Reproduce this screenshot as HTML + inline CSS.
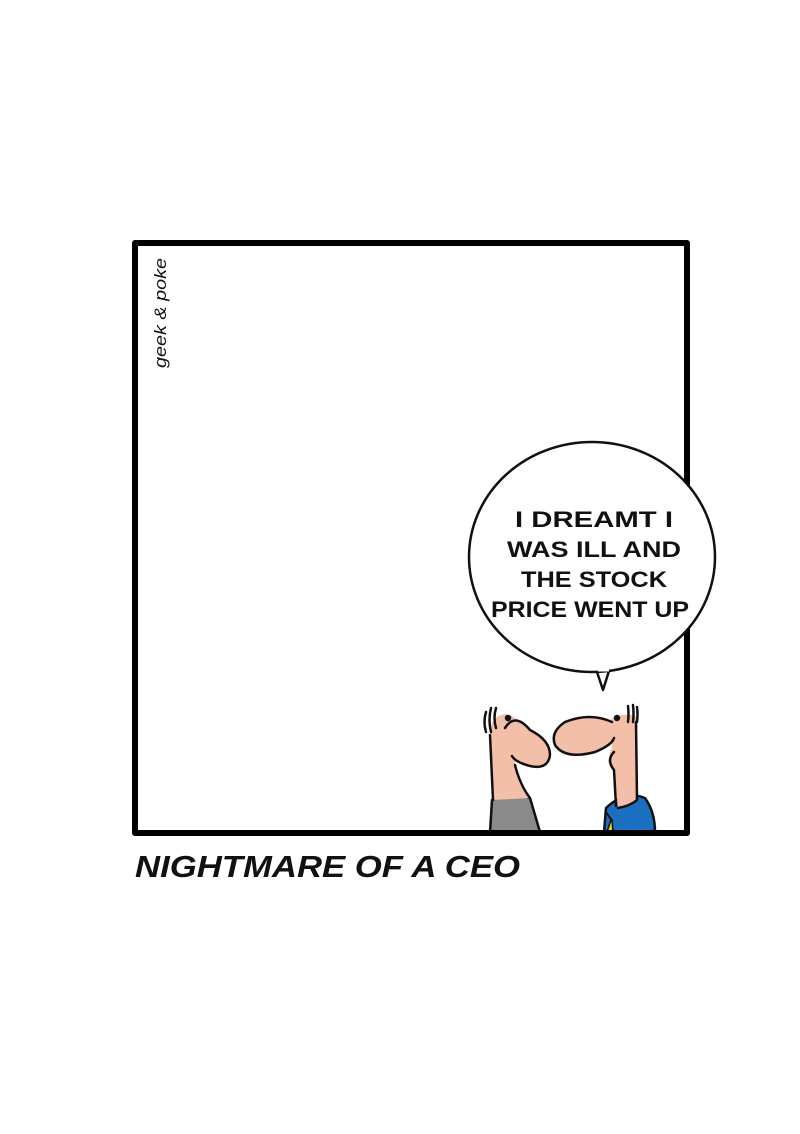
<!DOCTYPE html>
<html><head><meta charset="utf-8"><style>
html,body{margin:0;padding:0;background:#fff;}
svg{display:block}
</style></head><body>
<svg width="800" height="1134" viewBox="0 0 800 1134" xmlns="http://www.w3.org/2000/svg">
<rect width="800" height="1134" fill="#fff"/>
<g stroke="#111" stroke-width="2.5" stroke-linecap="round" stroke-linejoin="round" fill="none">
<!-- left guy body -->
<path d="M490 832 L492 800 Q510 790 530 798 L540 832 Z" fill="#8a8a8a"/>
<path d="M493 800 L490 730 Q492 716 505 714 Q518 716 520 728 L515 765 Q520 785 530 798 Z" fill="#f4bfa8" stroke="none"/>
<path d="M493 800 L490 735"/>
<path d="M515 765 Q520 785 530 798"/>
<path d="M505 728 Q515 712 530 730 Q550 740 550 755 Q548 770 530 766 Q515 762 512 756" fill="#f4bfa8"/>
<path d="M486 712 Q483 722 486 732 M491 708 Q488 720 491 732 M496 708 Q493 718 496 728"/>
<circle cx="508" cy="718" r="2" fill="#111"/>
<!-- right guy body -->
<path d="M604 832 L606 808 Q625 790 645 798 Q655 812 655 832 Z" fill="#1a6fc0"/>
<path d="M606 812 L611 820 L607 832 L613 832 L612 820 Z" fill="#f2d21a" stroke-width="1.5"/>
<!-- right head -->
<path d="M610 720 Q622 712 636 716 L637 800 Q628 805 618 808 L614 770 Q606 756 612 748 Z" fill="#f4bfa8" stroke="none"/>
<path d="M636 722 L637 800 Q630 806 618 808"/>
<path d="M616 806 L614 770 Q606 760 614 752"/>
<path d="M612 722 Q590 712 565 722 Q550 732 555 745 Q565 760 595 752 Q612 745 614 738" fill="#f4bfa8"/>
<path d="M628 706 Q629 714 628 722 M633 705 Q634 714 633 722 M637 707 Q638 714 637 722"/>
<circle cx="617" cy="718" r="2" fill="#111"/>
</g>
<!-- frame -->
<rect x="135" y="243" width="552" height="590" fill="none" stroke="#000" stroke-width="6" stroke-linejoin="round"/>
<!-- bubble -->
<path d="M597 672 L603 690 L609 671" fill="#fff" stroke="#111" stroke-width="2.5" stroke-linejoin="round"/>
<ellipse cx="592" cy="557" rx="123" ry="115" fill="#fff" stroke="#111" stroke-width="2.5"/>
<path d="M598 670 L609 670" stroke="#fff" stroke-width="3"/>
<g font-family="Liberation Sans, sans-serif" font-size="22" font-weight="bold" fill="#111" text-anchor="middle">
<text x="594" y="527" textLength="158" lengthAdjust="spacingAndGlyphs">I DREAMT I</text>
<text x="594" y="557" textLength="174" lengthAdjust="spacingAndGlyphs">WAS ILL AND</text>
<text x="594" y="587" textLength="146" lengthAdjust="spacingAndGlyphs">THE STOCK</text>
<text x="590" y="617" textLength="198" lengthAdjust="spacingAndGlyphs">PRICE WENT UP</text>
</g>
<text transform="translate(166,368) rotate(-90)" font-family="Liberation Sans, sans-serif" font-style="italic" font-size="17" fill="#111" textLength="110" lengthAdjust="spacingAndGlyphs">geek &amp; poke</text>
<text x="135" y="877" font-family="Liberation Sans, sans-serif" font-style="italic" font-weight="bold" font-size="31" fill="#111" textLength="385" lengthAdjust="spacingAndGlyphs">NIGHTMARE OF A CEO</text>
</svg>
</body></html>
